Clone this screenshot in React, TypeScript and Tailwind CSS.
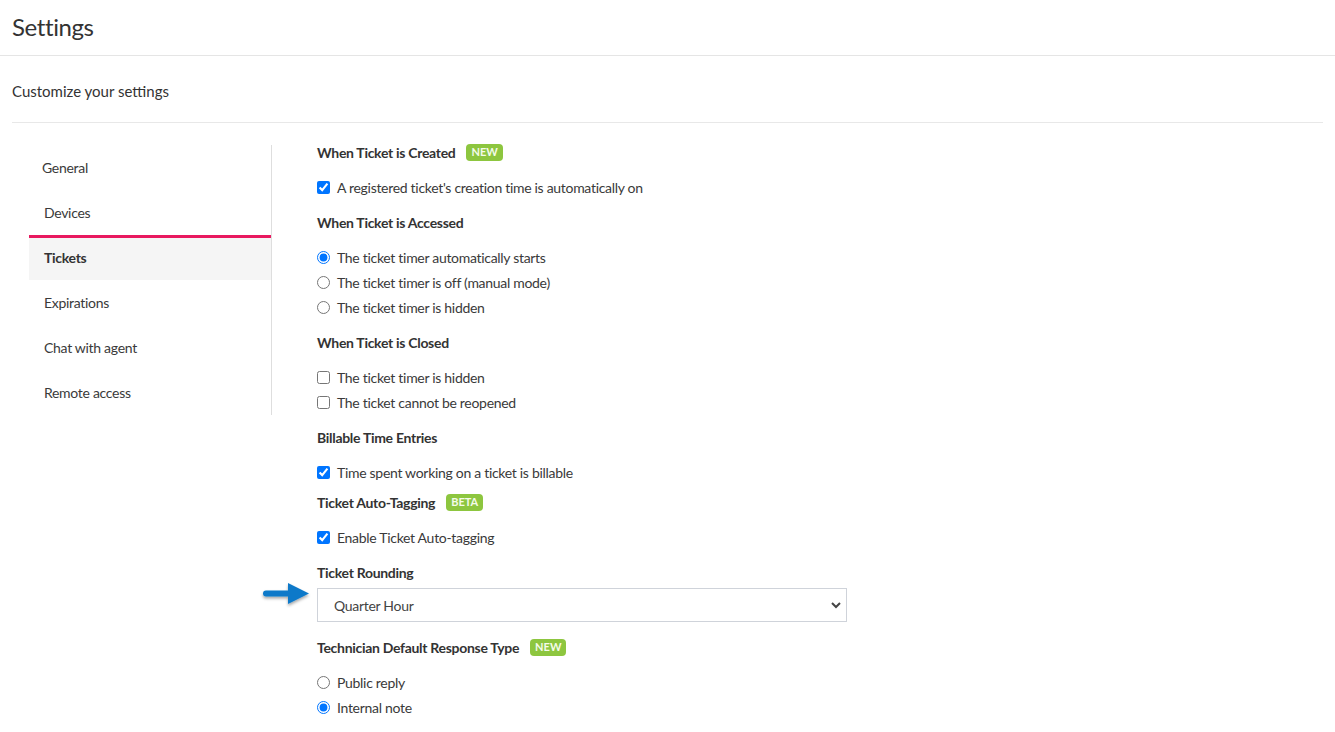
import React from 'react';

const FONT = { fontFamily: 'Lato, "Open Sans", sans-serif' };

const NAV = ['General', 'Devices', 'Tickets', 'Expirations', 'Chat with agent', 'Remote access'];

function Badge({ children }: { children: React.ReactNode }) {
  return (
    <span className="ml-[11px] inline-flex h-[17px] items-center rounded-[4px] bg-[#8dc63f] px-[5px] text-[11px] font-bold tracking-normal text-[#f4fbe9]">
      {children}
    </span>
  );
}

function Heading({ children, badge }: { children: React.ReactNode; badge?: string }) {
  return (
    <div className="flex h-[25px] items-center text-[14px] font-bold tracking-[-0.3px] text-[#333]">
      {children}
      {badge && <Badge>{badge}</Badge>}
    </div>
  );
}

function Option({ type, label, checked, name }: { type: 'checkbox' | 'radio'; label: string; checked?: boolean; name?: string }) {
  return (
    <label className="flex h-[25px] items-center text-[14px] tracking-[-0.3px] text-[#3a3a3a]">
      <input
        type={type}
        name={name}
        defaultChecked={checked}
        className="m-0 h-[13px] w-[13px] accent-[#0075ff]"
      />
      <span className="ml-[7px]">{label}</span>
    </label>
  );
}

function Arrow() {
  return (
    <svg width="58" height="28" viewBox="0 0 58 28" className="absolute left-[-62px] top-[-8px]">
      <defs>
        <filter id="sh" x="-20%" y="-40%" width="140%" height="180%">
          <feDropShadow dx="0" dy="2" stdDeviation="1.5" floodColor="#000" floodOpacity="0.35" />
        </filter>
      </defs>
      <g filter="url(#sh)">
        <path d="M11 10.5 H33 V3 L54 13.5 L33 24 V16.5 H11 A3 3 0 0 1 11 10.5 Z" fill="#0b79c9" />
      </g>
    </svg>
  );
}

export default function App() {
  return (
    <div className="min-h-screen bg-white text-[#333]" style={FONT}>
      <div className="flex h-[56px] items-center border-b border-[#e5e5e5] px-[12px] pb-[2px]">
        <h1 className="text-[24px] font-normal tracking-[-0.4px] text-[#333]">Settings</h1>
      </div>
      <div className="px-[12px]">
        <div className="flex h-[67px] items-center border-b border-[#e8e8e8] pt-[5px] text-[15px] text-[#333]">
          Customize your settings
        </div>
        <div className="flex pt-[17px]">
          <nav className="ml-[17px] mt-[5px] w-[243px] self-start border-r border-[#dedede]">
            {NAV.map((n) => {
              const active = n === 'Tickets';
              return (
                <div
                  key={n}
                  className={`flex h-[45px] items-center text-[14px] tracking-[-0.3px] ${
                    n === 'General' ? 'pl-[13px]' : 'pl-[15px]'
                  } ${active ? 'border-t-[3px] border-[#e8195f] bg-[#f5f5f5] font-bold text-[#333]' : 'text-[#3a3a3a]'}`}
                >
                  <span className={active ? 'mt-[-3px]' : ''}>{n}</span>
                </div>
              );
            })}
          </nav>
          <div className="ml-[45px] flex flex-col">
            <Heading badge="NEW">When Ticket is Created</Heading>
            <div className="mt-[10px]">
              <Option type="checkbox" checked label="A registered ticket's creation time is automatically on" />
            </div>
            <div className="mt-[10px]">
              <Heading>When Ticket is Accessed</Heading>
            </div>
            <div className="mt-[10px]">
              <Option type="radio" name="acc" checked label="The ticket timer automatically starts" />
              <Option type="radio" name="acc" label="The ticket timer is off (manual mode)" />
              <Option type="radio" name="acc" label="The ticket timer is hidden" />
            </div>
            <div className="mt-[10px]">
              <Heading>When Ticket is Closed</Heading>
            </div>
            <div className="mt-[10px]">
              <Option type="checkbox" label="The ticket timer is hidden" />
              <Option type="checkbox" label="The ticket cannot be reopened" />
            </div>
            <div className="mt-[10px]">
              <Heading>Billable Time Entries</Heading>
            </div>
            <div className="mt-[10px]">
              <Option type="checkbox" checked label="Time spent working on a ticket is billable" />
            </div>
            <div className="mt-[5px]">
              <Heading badge="BETA">Ticket Auto-Tagging</Heading>
            </div>
            <div className="mt-[10px]">
              <Option type="checkbox" checked label="Enable Ticket Auto-tagging" />
            </div>
            <div className="mt-[10px]">
              <Heading>Ticket Rounding</Heading>
            </div>
            <div className="relative mt-[3px] w-[530px]">
              <Arrow />
              <select
                defaultValue="quarter"
                className="h-[34px] w-full appearance-none border border-[#cfd3da] bg-white pl-[16px] text-[14px] tracking-[-0.3px] text-[#444] outline-none"
              >
                <option value="none">None</option>
                <option value="quarter">Quarter Hour</option>
                <option value="half">Half Hour</option>
                <option value="hour">Hour</option>
              </select>
              <svg
                width="12"
                height="8"
                viewBox="0 0 12 8"
                className="pointer-events-none absolute right-[5px] top-[13px]"
              >
                <path d="M2 2 L6 6 L10 2" fill="none" stroke="#444" strokeWidth="2" />
              </svg>
            </div>
            <div className="mt-[13px]">
              <Heading badge="NEW">Technician Default Response Type</Heading>
            </div>
            <div className="mt-[10px]">
              <Option type="radio" name="resp" label="Public reply" />
              <Option type="radio" name="resp" checked label="Internal note" />
            </div>
          </div>
        </div>
      </div>
    </div>
  );
}
